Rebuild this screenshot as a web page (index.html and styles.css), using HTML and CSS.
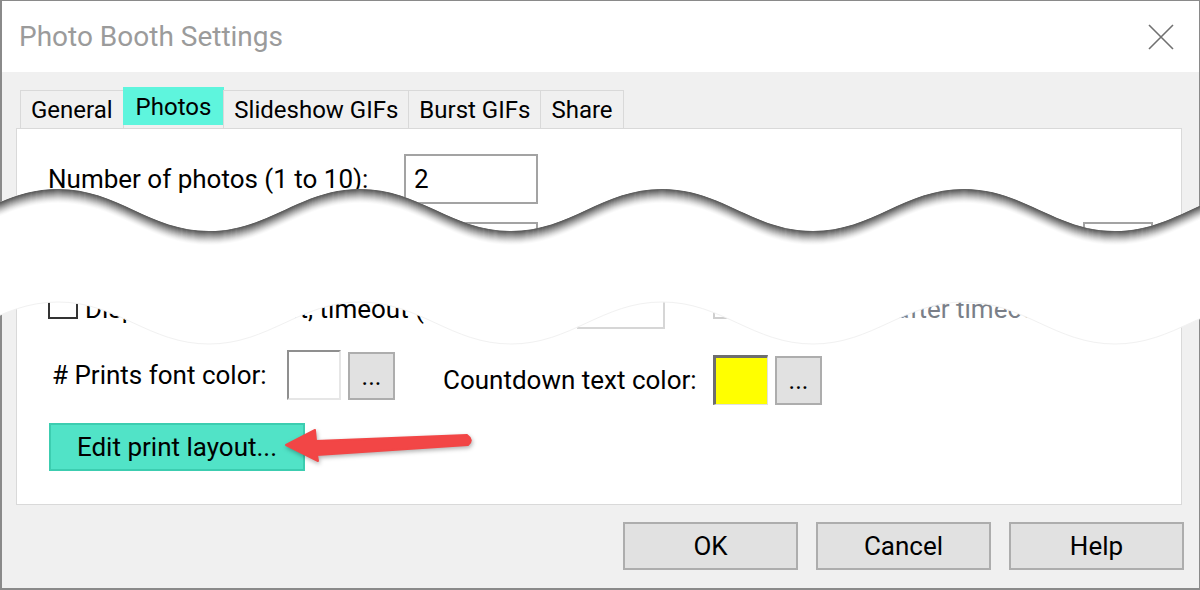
FILE: index.html
```html
<!DOCTYPE html>
<html lang="en">
<head>
  <meta charset="UTF-8">
  <title>Photo Booth Settings</title>
  <link rel="stylesheet" href="styles.css">
</head>
<body>
  <div class="screen">
    <div class="dialog">
      <div class="titlebar">
        <span class="title">Photo Booth Settings</span>
        <svg class="close" width="26" height="26" viewBox="0 0 26 26">
          <path d="M1 1 L25 25 M25 1 L1 25" stroke="#707070" stroke-width="1.6" fill="none"/>
        </svg>
      </div>

      <div class="content">
        <div class="tabs">
          <div class="tab">General</div>
          <div class="tab active">Photos</div>
          <div class="tab">Slideshow GIFs</div>
          <div class="tab">Burst GIFs</div>
          <div class="tab">Share</div>
        </div>

        <div class="panel">
          <div class="row">
            <span class="label label-main">Number of photos (1 to 10):</span>
            <div class="input count">2</div>
          </div>

          <div class="row row-second">
            <span class="label label-main">Photo countdown (seconds):</span>
            <div class="input count"></div>
            <span class="label label-side">Time between photos (seconds):</span>
            <div class="input narrow"></div>
          </div>

          <div class="row row-check">
            <div class="check-field check-first">
              <span class="checkbox"></span>
              <span class="check-text">Display # prints left, timeout (</span>
            </div>
            <div class="input timeout"></div>
            <div class="check-field disabled">
              <span class="checkbox"></span>
              <span class="check-text">Hide counts after timeout</span>
            </div>
          </div>

          <div class="row row-colors">
            <div class="color-field prints">
              <span class="label">&#35; Prints font color:</span>
              <span class="swatch"></span>
              <button class="dots">...</button>
            </div>
            <div class="color-field countdown">
              <span class="label">Countdown text color:</span>
              <span class="swatch yellow"></span>
              <button class="dots">...</button>
            </div>
          </div>

          <div class="row">
            <button class="edit-btn">Edit print layout...</button>
          </div>
        </div>

        <div class="actions">
          <button class="btn">OK</button>
          <button class="btn">Cancel</button>
          <button class="btn">Help</button>
        </div>
      </div>
    </div>

    <!-- torn-paper break laid over the middle of the dialog -->
    <svg class="overlay" width="1200" height="590" viewBox="0 0 1200 590">
      <defs>
        <path id="edge" d="M-93 231 C-33 231 -2 189 58 189 C118 189 149 231 209 231 C269 231 300 189 360 189 C420 189 451 231 511 231 C571 231 602 189 662 189 C722 189 753 231 813 231 C873 231 904 189 964 189 C1024 189 1055 231 1115 231 C1175 231 1206 189 1266 189"/>
        <path id="band" d="M-93 231 C-33 231 -2 189 58 189 C118 189 149 231 209 231 C269 231 300 189 360 189 C420 189 451 231 511 231 C571 231 602 189 662 189 C722 189 753 231 813 231 C873 231 904 189 964 189 C1024 189 1055 231 1115 231 C1175 231 1206 189 1266 189 L1266 302 C1206 302 1175 344 1115 344 C1055 344 1024 302 964 302 C904 302 873 344 813 344 C753 344 722 302 662 302 C602 302 571 344 511 344 C451 344 420 302 360 302 C300 302 269 344 209 344 C149 344 118 302 58 302 C-2 302 -33 344 -93 344 Z"/>
        <clipPath id="band-clip"><use href="#band"/></clipPath>
      </defs>
      <use href="#band" fill="#fff"/>
      <g clip-path="url(#band-clip)" fill="none" stroke-width="1.6">
        <use href="#edge" y="13" stroke="#fbfbfb"/>
        <use href="#edge" y="12" stroke="#f5f5f5"/>
        <use href="#edge" y="11" stroke="#ededed"/>
        <use href="#edge" y="10" stroke="#e3e3e3"/>
        <use href="#edge" y="9" stroke="#d8d8d8"/>
        <use href="#edge" y="8" stroke="#cbcbcb"/>
        <use href="#edge" y="7" stroke="#bdbdbd"/>
        <use href="#edge" y="6" stroke="#afafaf"/>
        <use href="#edge" y="5" stroke="#a0a0a0"/>
        <use href="#edge" y="4" stroke="#919191"/>
        <use href="#edge" y="3" stroke="#828282"/>
        <use href="#edge" y="2" stroke="#737373"/>
        <use href="#edge" y="1" stroke="#656565"/>
        <use href="#edge" y="0" stroke="#595959"/>
      </g>
      <use href="#edge" y="113" fill="none" stroke="#f1f1f1" stroke-width="1"/>
    </svg>

    <svg class="overlay arrow" width="1200" height="590" viewBox="0 0 1200 590">
      <path d="M286 445 L315 430 L316 441 L467 435 Q474 440 468 445 L317 455 L318 461 Z" fill="#f24646" stroke="#f24646" stroke-width="2" stroke-linejoin="round"/>
    </svg>
  </div>
</body>
</html>
```

FILE: styles.css
```css
body {
  margin: 0;
  font-family: Roboto, 'Liberation Sans', sans-serif;
  background: #fff;
  color: #000;
}

.screen {
  position: relative;
  width: 1200px;
  height: 590px;
  overflow: hidden;
}

.dialog {
  box-sizing: border-box;
  width: 1200px;
  height: 590px;
  border: 1px solid #8a8a8a;
  border-left-width: 2px;
  border-bottom-width: 2px;
  background: #f0f0f0;
  display: flex;
  flex-direction: column;
}

.titlebar {
  height: 71px;
  background: #fff;
  display: flex;
  align-items: center;
  justify-content: space-between;
  padding: 0 25px 0 17px;
}

.title {
  font-size: 28px;
  color: #9b9b9b;
}

.content {
  flex: 1;
  padding: 15px 0 0 14px;
}

.tabs {
  display: flex;
  align-items: flex-end;
  height: 41px;
  padding-left: 4px;
}

.tab {
  box-sizing: border-box;
  height: 38px;
  padding: 0 10px;
  margin-left: -1px;
  border: 1px solid #d9d9d9;
  border-bottom: none;
  font-size: 24px;
  display: flex;
  align-items: center;
}

.tab:first-child {
  margin-left: 0;
}

.tab.active {
  background: #5ef5dd;
  border-color: #5ef5dd;
  margin-bottom: 3px;
  padding: 0 12px;
}

.panel {
  box-sizing: border-box;
  width: 1166px;
  height: 377px;
  background: #fff;
  border: 1px solid #d9d9d9;
  padding: 25px 0 0 31px;
}

.row {
  display: flex;
  align-items: center;
  font-size: 26px;
}

.label-main {
  width: 356px;
}

.label-side {
  box-sizing: border-box;
  width: 545px;
  padding-left: 32px;
}

.input {
  box-sizing: border-box;
  height: 50px;
  border: 2px solid #a3a3a3;
  background: #fff;
  padding-left: 8px;
  display: flex;
  align-items: center;
}

.input.count { width: 134px; }
.input.narrow { width: 70px; }

.input.timeout {
  width: 88px;
  border-color: #d6d6d6;
}

.row-second {
  margin-top: 18px;
}

.row-check {
  margin-top: 7px;
}

.check-field {
  display: flex;
  align-items: center;
  gap: 7px;
}

.check-first {
  width: 529px;
}

.checkbox {
  box-sizing: border-box;
  width: 30px;
  height: 30px;
  border: 2px solid #333;
  background: #fff;
}

.check-text {
  padding-top: 10px;
}

.check-field.disabled {
  margin-left: 48px;
  color: #7a7f88;
}

.check-field.disabled .checkbox {
  border-color: #cfcfcf;
}

.row-colors {
  margin-top: 21px;
  align-items: flex-start;
}

.color-field {
  display: flex;
  align-items: flex-end;
}

.color-field .label {
  align-self: center;
}

.prints {
  margin-left: 4px;
}

.prints .label {
  width: 235px;
}

.countdown {
  margin-left: 48px;
  margin-top: 5px;
}

.countdown .label {
  width: 270px;
}

.swatch {
  box-sizing: border-box;
  width: 54px;
  height: 50px;
  background: #fff;
  border: 2px solid;
  border-color: #8f8f8f #e6e6e6 #e6e6e6 #8f8f8f;
}

.swatch.yellow {
  width: 55px;
  background: #ffff00;
  border-width: 3px 1px 1px 3px;
  border-color: #6e6e6e #e0e0e0 #e0e0e0 #6e6e6e;
}

.dots {
  box-sizing: border-box;
  width: 47px;
  height: 48px;
  margin-left: 7px;
  padding: 0;
  background: #e1e1e1;
  border: 2px solid #adadad;
  font-family: inherit;
  font-size: 25px;
  color: #000;
}

.countdown .dots {
  height: 49px;
}

.edit-btn {
  box-sizing: border-box;
  width: 256px;
  height: 48px;
  margin: 18px 0 0 1px;
  background: #51e3c7;
  border: 2px solid #3ccdb0;
  font-family: inherit;
  font-size: 26px;
  color: #000;
}

.actions {
  width: 1168px;
  display: flex;
  justify-content: flex-end;
  gap: 18px;
  margin-top: 17px;
}

.btn {
  box-sizing: border-box;
  width: 175px;
  height: 48px;
  background: #e1e1e1;
  border: 2px solid #adadad;
  font-family: inherit;
  font-size: 26px;
  color: #000;
}

.overlay {
  position: absolute;
  top: 0;
  left: 0;
}

.arrow {
  filter: drop-shadow(1px 2px 2px rgba(0, 0, 0, 0.3));
}
```
